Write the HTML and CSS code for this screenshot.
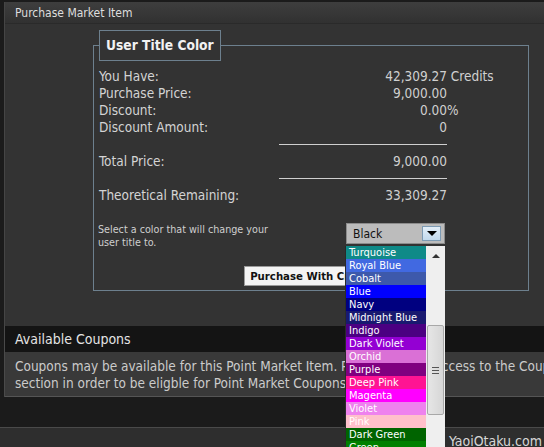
FILE: index.html
```html
<!DOCTYPE html>
<html>
<head>
<meta charset="utf-8">
<link rel="stylesheet" href="styles.css">
</head>
<body>
<div class="page">
  <div class="panel">
    <div class="panel-title">Purchase Market Item</div>
    <div class="panel-body">
      <fieldset class="box">
        <legend class="box-legend">User Title Color</legend>
        <table class="summary">
          <tr><td class="lbl">You Have:</td><td class="val">42,309.27</td><td class="unit"> Credits</td></tr>
          <tr><td class="lbl">Purchase Price:</td><td class="val">9,000.00</td><td class="unit"></td></tr>
          <tr><td class="lbl">Discount:</td><td class="val">0.00</td><td class="unit">%</td></tr>
          <tr><td class="lbl">Discount Amount:</td><td class="val">0</td><td class="unit"></td></tr>
          <tr class="sep"><td></td><td><div class="rule"></div></td><td></td></tr>
          <tr><td class="lbl">Total Price:</td><td class="val">9,000.00</td><td class="unit"></td></tr>
          <tr class="sep"><td></td><td><div class="rule"></div></td><td></td></tr>
          <tr><td class="lbl">Theoretical Remaining:</td><td class="val">33,309.27</td><td class="unit"></td></tr>
        </table>
        <div class="select-row">
          <p class="hint">Select a color that will change your user title to.</p>
          <div class="select">
            <span class="select-text">Black</span>
            <span class="select-btn"><span class="tri"></span></span>
          </div>
        </div>
        <div class="actions"><button class="buy">Purchase With Credits</button></div>
      </fieldset>
    </div>
  </div>
  <div class="coupons">
    <div class="coupons-head">Available Coupons</div>
    <div class="coupons-body">Coupons may be available for this Point Market Item. Please request access to the Coupons section in order to be eligble for Point Market Coupons.</div>
  </div>
  <div class="gap"></div>
  <div class="footer"><span class="footer-text">YaoiOtaku.com</span></div>

  <div class="listbox">
    <ul class="options">
      <li style="background:#0f8a88">Turquoise</li>
      <li style="background:#4169e1">Royal Blue</li>
      <li style="background:#3d59ab">Cobalt</li>
      <li style="background:#0000ff">Blue</li>
      <li style="background:#000080">Navy</li>
      <li style="background:#191970">Midnight Blue</li>
      <li style="background:#4b0082">Indigo</li>
      <li style="background:#9400d3">Dark Violet</li>
      <li style="background:#da70d6">Orchid</li>
      <li style="background:#800080">Purple</li>
      <li style="background:#ff1493">Deep Pink</li>
      <li style="background:#ff00ff">Magenta</li>
      <li style="background:#ee82ee">Violet</li>
      <li style="background:#ffc0cb">Pink</li>
      <li style="background:#006400">Dark Green</li>
      <li style="background:#008000">Green</li>
    </ul>
    <div class="scrollbar">
      <div class="sb-up"><span class="sb-tri"></span></div>
      <div class="sb-track">
        <div class="sb-thumb"><span class="grip"></span><span class="grip"></span><span class="grip"></span></div>
      </div>
    </div>
  </div>
</div>
</body>
</html>
```

FILE: styles.css
```css
html, body {
  margin: 0;
  padding: 0;
  overflow: hidden;
  background: #1b1b1b;
}
body {
  font-family: "DejaVu Sans Condensed", "DejaVu Sans", sans-serif;
  font-stretch: condensed;
  color: #d6d6d6;
}
.page {
  position: relative;
  width: 640px;
  height: 447px;
  padding-top: 2px;
  box-sizing: border-box;
}
.panel {
  margin-left: 4px;
  border-left: 1px solid #454545;
  background: #333333;
}
.panel-title {
  height: 22px;
  line-height: 22px;
  padding-left: 10px;
  font-size: 12px;
  color: #dedede;
  background: linear-gradient(#3e3e3e, #313131);
  border-bottom: 1px solid #2a2a2a;
  box-sizing: border-box;
}
.panel-body {
  height: 302px;
  padding-top: 6px;
  box-sizing: border-box;
}
.box {
  margin: 0 0 0 88px;
  width: 436px;
  box-sizing: border-box;
  border: 1px solid #6d808e;
  padding: 0 0 4px 5px;
  min-width: 0;
}
.box-legend {
  border: 1px solid #6d808e;
  padding: 6px 6px 7px;
  line-height: 16px;
  font-size: 13.7px;
  font-weight: bold;
  color: #f2f2f2;
  margin-left: 0;
}
.summary {
  border-collapse: collapse;
  margin-top: 7px;
  font-size: 13.5px;
}
.summary td {
  padding: 0;
  line-height: 17px;
  height: 17px;
}
.lbl {
  width: 180px;
  color: #d4d4d4;
}
.val {
  width: 168px;
  text-align: right;
  color: #d0d0d0;
}
.unit {
  white-space: pre;
  color: #d0d0d0;
}
.sep td {
  height: 17px;
}
.rule {
  height: 1px;
  background: #cfcfcf;
}
.select-row {
  display: grid;
  grid-template-columns: 180px 166px;
  margin-top: 19px;
}
.hint {
  margin: 0 0 0 -1px;
  width: 175px;
  font-size: 10.7px;
  line-height: 13px;
  color: #cfcfcf;
}
.select {
  justify-self: end;
  width: 99px;
  height: 21px;
  box-sizing: border-box;
  background: #bcbcbc;
  border: 1px solid #8c8c8c;
  display: flex;
  align-items: center;
  justify-content: space-between;
  padding: 0 3px 0 6px;
}
.select-text {
  font-size: 12px;
  color: #111;
}
.select-btn {
  width: 19px;
  height: 15px;
  box-sizing: border-box;
  border: 1px solid #7d9bb4;
  background: linear-gradient(#e2eef8, #c2d9ec);
  display: flex;
  align-items: center;
  justify-content: center;
}
.tri {
  width: 0;
  height: 0;
  border-left: 5px solid transparent;
  border-right: 5px solid transparent;
  border-top: 5px solid #000;
}
.actions {
  display: flex;
  justify-content: center;
  margin-top: 17px;
  padding-left: 1px;
}
.buy {
  height: 20px;
  padding: 0 5px;
  font-family: "DejaVu Sans Condensed", "DejaVu Sans", sans-serif;
  font-stretch: condensed;
  font-size: 11.3px;
  font-weight: bold;
  color: #111;
  background: #f4f4f4;
  border: 1px solid #9a9a9a;
  border-radius: 0;
}
.coupons {
  margin-left: 4px;
  border-left: 1px solid #4a4a4a;
}
.coupons-head {
  height: 26px;
  line-height: 26px;
  padding-left: 10px;
  font-size: 14px;
  color: #e4e4e4;
  background: #141414;
}
.coupons-body {
  background: #393939;
  padding: 6px 42px 4px 10px;
  font-size: 13.5px;
  line-height: 17px;
  color: #cbcbcb;
  border-bottom: 1px solid #555;
}
.gap {
  height: 30px;
}
.footer {
  height: 30px;
  border-top: 1px solid #4a4a4a;
  background: #2e2e2e;
  padding-left: 449px;
}
.footer-text {
  display: block;
  padding-top: 5px;
  font-size: 14px;
  line-height: 17px;
  color: #d6d6d6;
}
.listbox {
  position: absolute;
  left: 345px;
  top: 246px;
  width: 100px;
  height: 210px;
  display: flex;
  background: #f0f0f0;
  border-left: 1px solid #2a2a2a;
  box-sizing: border-box;
}
.options {
  list-style: none;
  margin: 0;
  padding: 0;
  width: 80px;
}
.options li {
  height: 13px;
  line-height: 13px;
  font-size: 11px;
  color: #fff;
  padding-left: 3px;
  white-space: nowrap;
  overflow: hidden;
}
.scrollbar {
  width: 19px;
  display: flex;
  flex-direction: column;
  background: #efefef;
}
.sb-up {
  height: 20px;
  display: flex;
  align-items: center;
  justify-content: center;
}
.sb-tri {
  width: 0;
  height: 0;
  border-left: 4px solid transparent;
  border-right: 4px solid transparent;
  border-bottom: 4px solid #333;
}
.sb-track {
  flex: 1;
  padding-top: 59px;
}
.sb-thumb {
  margin: 0 1px;
  height: 90px;
  box-sizing: border-box;
  border: 1px solid #a8a8a8;
  border-radius: 2px;
  background: linear-gradient(90deg, #e6e6e6, #d6d6d6);
  display: flex;
  flex-direction: column;
  align-items: center;
  justify-content: center;
  gap: 2px;
}
.grip {
  display: block;
  width: 7px;
  height: 1px;
  background: #555;
}
```
